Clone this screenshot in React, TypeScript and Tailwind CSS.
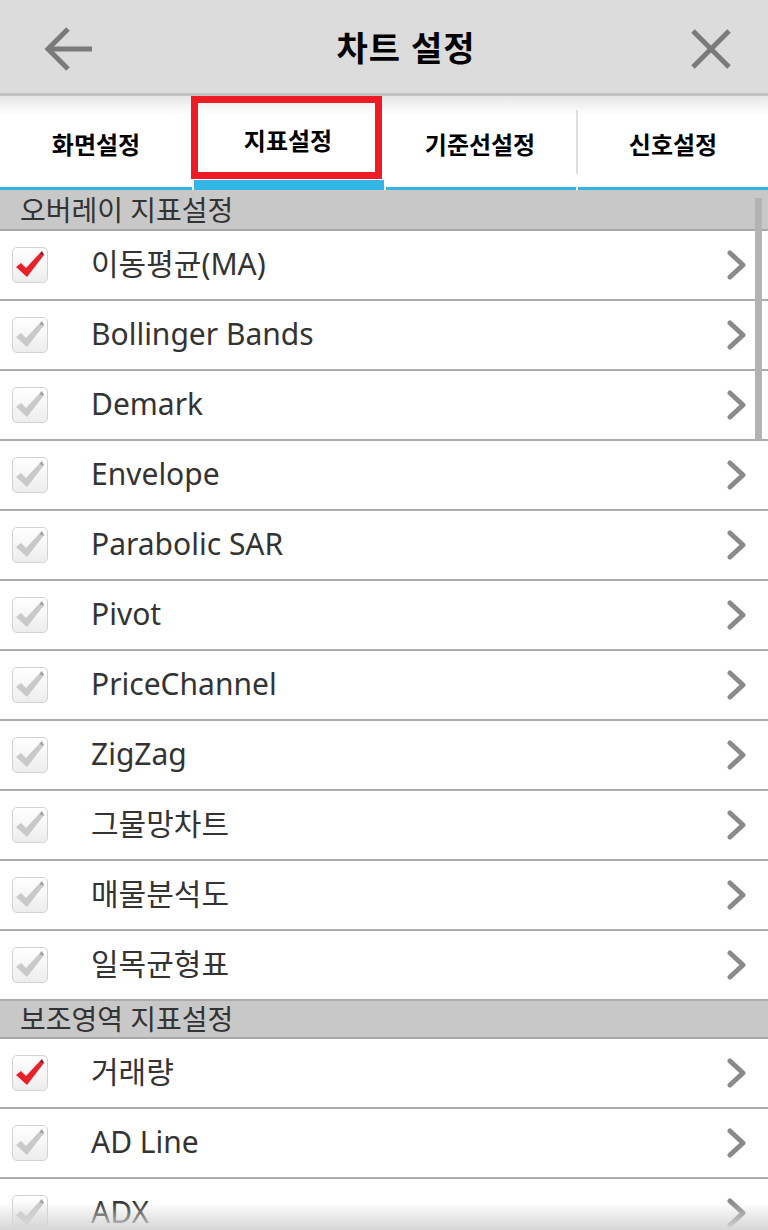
import React from 'react';

const font = { fontFamily: '"Noto Sans", "Noto Sans CJK KR", sans-serif' };

const overlay = [
    { name: '이동평균(MA)', on: true },
    { name: 'Bollinger Bands', on: false },
    { name: 'Demark', on: false },
    { name: 'Envelope', on: false },
    { name: 'Parabolic SAR', on: false },
    { name: 'Pivot', on: false },
    { name: 'PriceChannel', on: false },
    { name: 'ZigZag', on: false },
    { name: '그물망차트', on: false },
    { name: '매물분석도', on: false },
    { name: '일목균형표', on: false },
];

const sub = [
    { name: '거래량', on: true },
    { name: 'AD Line', on: false },
    { name: 'ADX', on: false },
];

const tabs = ['화면설정', '지표설정', '기준선설정', '신호설정'];

function Check({ on }: { on: boolean }) {
    const face = on ? '#e8202a' : '#c9c9c9';
    const side = on ? '#a5121a' : '#a3a3a3';
    return (
        <div className="w-[36px] h-[36px] rounded-[5px] border border-[#d2d2d2] bg-linear-to-b from-white to-[#ededed] flex items-center justify-center">
            <svg width="32" height="32" viewBox="0 0 32 32">
                <polygon points="2,18 7,14 12,19 25,5 29,7 13,28" fill={face} />
                <polygon points="25,5 28,2 30,6 13,28 29,7" fill={side} />
            </svg>
        </div>
    );
}

function Chevron() {
    return (
        <svg width="22" height="30" viewBox="0 0 22 30" className="mr-[20px]">
            <polyline points="4,3 17,15 4,27" fill="none" stroke="#8a8a8a" strokeWidth="5" strokeLinecap="round" strokeLinejoin="round" />
        </svg>
    );
}

function Row({ name, on }: { name: string; on: boolean }) {
    return (
        <div className="h-[70px] flex items-center border-b-[2px] border-[#ababab]">
            <div className="ml-[12px]">
                <Check on={on} />
            </div>
            <div className="ml-[43px] flex-1 text-[30px] text-[#333333] leading-none pb-[2px]">{name}</div>
            <Chevron />
        </div>
    );
}

function Section({ title, h }: { title: string; h: string }) {
    return (
        <div className={`${h} bg-[#c8c8c8] border-b-[2px] border-[#a9a9a9] flex items-center pl-[20px] text-[28px] text-[#333333] leading-none`}>
            {title}
        </div>
    );
}

export default function App() {
    return (
        <div className="w-[768px] h-[1230px] overflow-hidden relative bg-white" style={font}>
            {/* Header */}
            <div className="h-[93px] bg-[#dcdcdc] flex items-center px-[42px] pt-[4px]">
                <svg width="52" height="48" viewBox="0 0 52 48">
                    <polyline points="26,4 6,24 26,44" fill="none" stroke="#7a7a7a" strokeWidth="5" />
                    <line x1="6" y1="24" x2="50" y2="24" stroke="#7a7a7a" strokeWidth="5" />
                </svg>
                <div className="flex-1 text-center pl-[28px] text-[34px] font-bold text-black tracking-[1px]">차트 설정</div>
                <svg width="42" height="42" viewBox="0 0 42 42" className="mr-[-6px]">
                    <line x1="3" y1="3" x2="39" y2="39" stroke="#7a7a7a" strokeWidth="5" />
                    <line x1="39" y1="3" x2="3" y2="39" stroke="#7a7a7a" strokeWidth="5" />
                </svg>
            </div>
            <div className="h-[3px] bg-[#c2c2c2]" />

            {/* Tabs */}
            <div className="relative h-[94px] flex bg-linear-to-b from-[#e6e6e6] via-white via-[20%] to-white">
                {tabs.map((t, i) => (
                    <div key={t} className="flex-1 flex flex-col">
                        <div className="flex-1 flex items-center justify-center">
                            {i === 3 && <div className="w-[2px] h-[64px] bg-[#dedede] self-center" />}
                            <div className="flex-1 text-center text-[24px] font-bold text-black pt-[6px]">{t}</div>
                        </div>
                        <div className={`${i === 1 ? 'h-[10px]' : 'h-[3px]'} bg-[#33b5e5] ${i > 0 ? 'ml-[2px]' : ''}`} />
                    </div>
                ))}
                <div className="absolute left-[191px] top-0 w-[191px] h-[83px] border-[7px] border-[#ed1c24]" />
            </div>

            {/* List */}
            <Section title="오버레이 지표설정" h="h-[41px]" />
            {overlay.map((r) => (
                <Row key={r.name} name={r.name} on={r.on} />
            ))}
            <Section title="보조영역 지표설정" h="h-[38px]" />
            {sub.map((r) => (
                <Row key={r.name} name={r.name} on={r.on} />
            ))}

            {/* Scrollbar */}
            <div className="absolute right-[6px] top-[198px] w-[7px] h-[242px] bg-[#b3b3b3]" />
            {/* Bottom fade */}
            <div className="absolute bottom-0 left-0 w-full h-[28px] bg-linear-to-b from-white/0 to-[#d6d6d6]" />
        </div>
    );
}
